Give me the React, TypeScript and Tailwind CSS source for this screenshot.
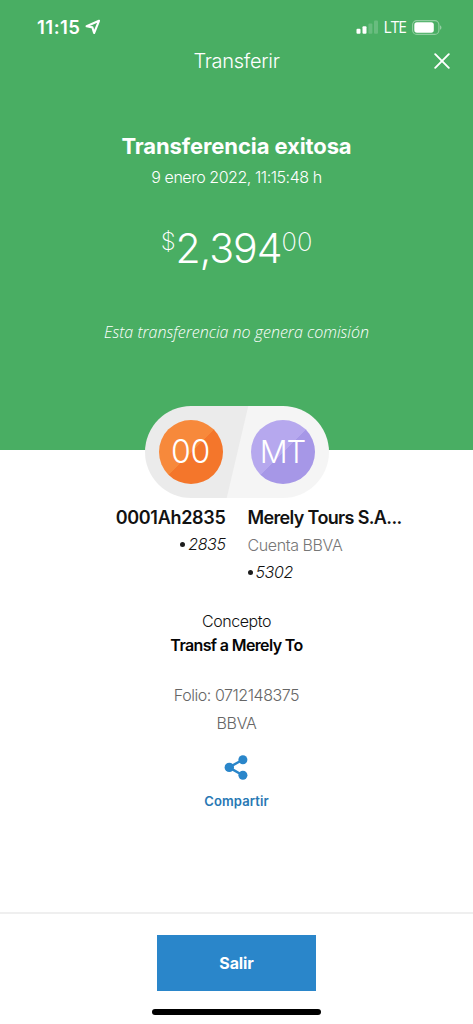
import React from 'react';

const inter = "font-['Inter','Liberation_Sans',sans-serif]";
const light = "font-['Inter','Liberation_Sans',sans-serif] font-light";

function StatusBar() {
  return (
    <div className="flex h-6 w-full items-center justify-between pl-[37px] pr-[31px]">
      <div className="flex items-center gap-[4px]">
        <span className={`${inter} text-[18.5px] leading-6 font-semibold tracking-[0.5px]`}>11:15</span>
        <svg width="16" height="16" viewBox="0 0 16 16" fill="none" stroke="currentColor" strokeWidth="2.1" strokeLinejoin="round">
          <path d="M14 1.8 1.6 7.3 7.4 8.4 9.1 14Z" />
        </svg>
      </div>
      <div className="flex items-center">
        <svg width="22" height="14" viewBox="0 0 22 14" fill="currentColor">
          <rect x="0.5" y="8.8" width="4" height="5" rx="1" />
          <rect x="6.5" y="6.2" width="4" height="7.6" rx="1" />
          <rect x="12.4" y="3.4" width="4" height="10.4" rx="1" opacity="0.18" />
          <rect x="18" y="0.5" width="4" height="13.3" rx="1" opacity="0.18" />
        </svg>
        <span className="ml-[5px] font-['Open_Sans','Liberation_Sans',sans-serif] text-[15.5px] leading-6 font-medium tracking-[-0.9px]">LTE</span>
        <svg className="ml-[6px]" width="30" height="15" viewBox="0 0 30 15" fill="none">
          <rect x="0.6" y="0.6" width="26.3" height="13.8" rx="4.2" stroke="white" strokeOpacity="0.4" strokeWidth="1.1" />
          <rect x="2.3" y="2.3" width="19.5" height="10.4" rx="2.6" fill="white" />
          <path d="M28.2 5.2c1.6.7 1.6 3.9 0 4.6Z" fill="white" fillOpacity="0.5" />
        </svg>
      </div>
    </div>
  );
}

function Avatars() {
  return (
    <div className="relative z-10 -mt-11 flex h-[92px] w-[184px] items-center justify-between overflow-hidden rounded-full bg-[linear-gradient(103.2deg,#ebebeb_50%,#f5f5f5_50.5%)] px-[14px]">
      <div className={`${light} flex size-[64px] items-center justify-center rounded-full bg-[linear-gradient(135deg,#f7893b_50%,#f4762b_50.5%)] text-[32px] leading-[48px] tracking-[-0.3px] text-white`}>00</div>
      <div className={`${light} flex size-[64px] items-center justify-center rounded-full bg-[linear-gradient(135deg,#b6a8ee_50%,#a697e7_50.5%)] text-[31px] leading-[48px] tracking-[-1px] text-white`}>MT</div>
    </div>
  );
}

function AccountEnding({ digits }: { digits: string }) {
  return (
    <div className="flex items-center gap-[3px]">
      <span className="size-[5px] rounded-full bg-[#1c1c1c]" />
      <span className="font-['Inter','Liberation_Sans',sans-serif] text-base leading-6 font-light tracking-[-0.4px] text-[#111] italic">{digits}</span>
    </div>
  );
}

export default function App() {
  return (
    <div className="flex h-[1024px] w-full flex-col items-center overflow-hidden bg-white">
      <header className="flex h-[450px] w-full shrink-0 flex-col items-center bg-[#49ae63] pt-[15px] text-white">
        <StatusBar />
        <div className="mt-2 grid h-7 w-full grid-cols-[62px_1fr_62px] items-center">
          <span />
          <h1 className={`${light} text-center text-xl leading-7 tracking-[-0.3px]`}>Transferir</h1>
          <button aria-label="Cerrar" className="flex justify-center">
            <svg width="16" height="16" viewBox="0 0 16 16" stroke="currentColor" strokeWidth="1.9" strokeLinecap="round">
              <path d="M1.2 1.2 14.8 14.8M14.8 1.2 1.2 14.8" />
            </svg>
          </button>
        </div>
        <h2 className={`${inter} mt-[57px] text-[22px] leading-7 font-bold tracking-[-0.1px]`}>Transferencia exitosa</h2>
        <p className={`${light} mt-[5px] text-base leading-6 tracking-[-0.45px]`}>9 enero 2022, 11:15:48 h</p>
        <div className={`${light} mt-[35px] flex h-12 items-start`}>
          <span className="pt-[3px] text-[24px] leading-[30px] font-extralight">$</span>
          <span className="text-[41px] leading-[48px] tracking-[-1px]">2,394</span>
          <span className="pt-[3px] text-[25.5px] leading-[30px] font-extralight">00</span>
        </div>
        <p className="mt-[48px] font-['Open_Sans','Liberation_Sans',sans-serif] text-base leading-6 font-light italic">Esta transferencia no genera comisión</p>
      </header>

      <Avatars />

      <div className="mt-2 grid w-full grid-cols-2">
        <div className="flex flex-col items-end pr-[11px]">
          <span className={`${inter} text-[18px] leading-6 font-semibold tracking-[-0.3px] text-[#121212]`}>0001Ah2835</span>
          <div className="mt-[2px]"><AccountEnding digits="2835" /></div>
        </div>
        <div className="flex flex-col items-start pl-[11px]">
          <span className={`${inter} text-[18px] leading-6 font-semibold tracking-[-0.65px] whitespace-nowrap text-[#121212]`}>Merely Tours S.A...</span>
          <span className={`${light} mt-[3px] text-base leading-6 tracking-[-0.4px] text-[#777]`}>Cuenta BBVA</span>
          <div className="mt-[3px]"><AccountEnding digits="5302" /></div>
        </div>
      </div>

      <span className={`${light} mt-[25px] text-base leading-6 tracking-[-0.45px] text-[#111]`}>Concepto</span>
      <span className={`${inter} text-base leading-6 font-semibold tracking-[-0.63px] text-[#050505]`}>Transf a Merely To</span>
      <span className={`${light} mt-[26px] text-base leading-6 tracking-[-0.45px] text-[#666]`}>Folio: 0712148375</span>
      <span className={`${light} mt-1 text-base leading-6 tracking-[-0.3px] text-[#666]`}>BBVA</span>

      <button className="mt-5 flex flex-col items-center text-[#2a86ca]">
        <svg width="24" height="25" viewBox="0 0 24 25" fill="currentColor">
          <path d="M18.7 4.7 5 12.4 18.7 20.2" fill="none" stroke="currentColor" strokeWidth="2.4" />
          <circle cx="18.9" cy="4.7" r="4.5" />
          <circle cx="5.3" cy="12.4" r="4.7" />
          <circle cx="18.9" cy="20.2" r="4.5" />
        </svg>
        <span className={`${inter} mt-[11px] text-[13px] leading-5 font-semibold tracking-[0.1px] text-[#2878b4]`}>Compartir</span>
      </button>

      <footer className="mt-auto flex h-[112px] w-full flex-col items-center border-t-2 border-[#efefef] pt-[21px]">
        <button className={`${inter} flex h-[56px] w-[159px] items-center justify-center bg-[#2a86ca] text-base font-bold tracking-[-0.1px] text-white`}>Salir</button>
        <div className="mt-[18px] h-[6px] w-[169px] rounded-full bg-black" />
      </footer>
    </div>
  );
}
